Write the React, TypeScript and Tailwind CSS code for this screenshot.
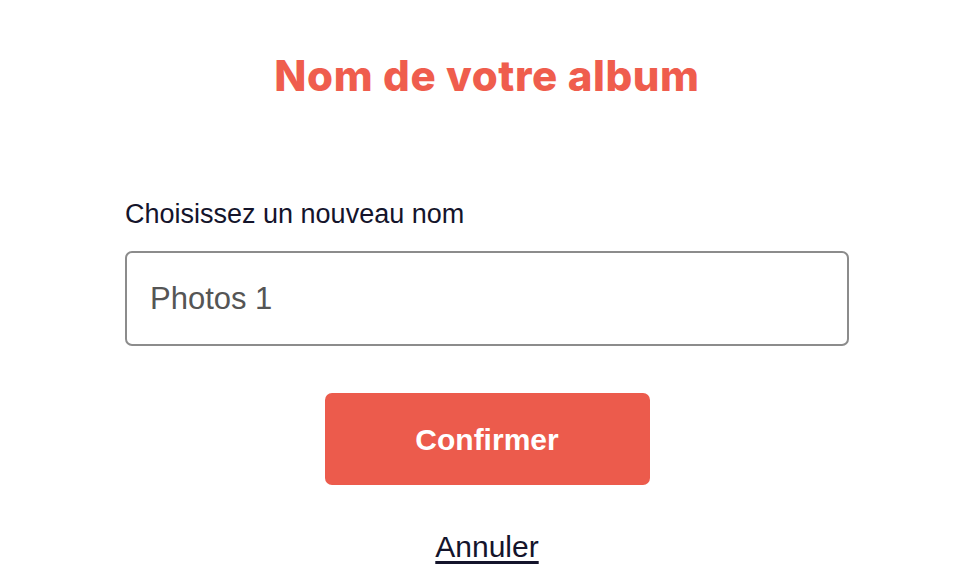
export default function App() {
  return (
    <div className="min-h-screen bg-white flex flex-col items-center" style={{ fontFamily: '"Liberation Sans", Arial, sans-serif' }}>
      <h1 className="mt-[50px] text-[42px] leading-[52px] font-extrabold text-[#ef5d4d] tracking-[0.6px]" style={{ fontFamily: 'Inter, "Noto Sans", sans-serif' }}>
        Nom de votre album
      </h1>

      <div className="w-[724px] mt-[97px] flex flex-col">
        <label className="text-[27px] leading-[30px] text-[#14142b]">Choisissez un nouveau nom</label>
        <input
          defaultValue="Photos 1"
          className="mt-[22px] h-[95px] w-full rounded-[7px] border-2 border-[#8c8c8c] px-[23px] text-[31px] text-[#555555] outline-none"
        />
      </div>

      <button className="mt-[47px] w-[325px] h-[92px] rounded-[7px] bg-[#ec5b4c] text-white text-[30px] font-bold">
        Confirmer
      </button>

      <a href="#" className="mt-[45px] text-[30px] leading-[34px] text-[#14142b] underline underline-offset-[4px]">
        Annuler
      </a>
    </div>
  );
}
